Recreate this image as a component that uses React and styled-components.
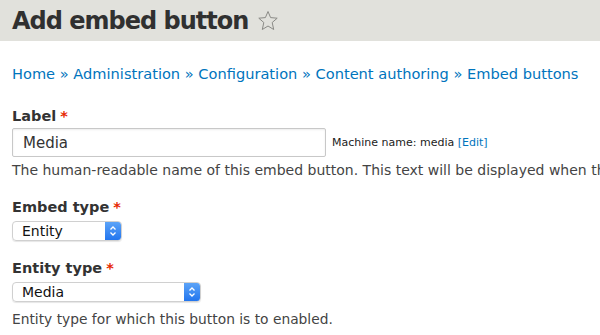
import React from 'react';
import styled, { createGlobalStyle } from 'styled-components';

const GlobalStyle = createGlobalStyle`
  body {
    margin: 0;
    background: #ffffff;
    font-family: "DejaVu Sans", Verdana, sans-serif;
    color: #333333;
    overflow: hidden;
  }
`;

const Header = styled.div`
  background-color: #e1e1dc;
  height: 41px;
  display: flex;
  align-items: center;
  padding-left: 12px;
  gap: 8px;
`;

const Title = styled.h1`
  margin: 0;
  font-size: 24px;
  font-weight: bold;
  color: #303030;
  letter-spacing: -1px;
`;

const Star = styled.svg`
  width: 24px;
  height: 24px;
  margin-top: 1px;
`;

const Content = styled.div`
  padding: 0 12px;
  overflow: hidden;
`;

const Breadcrumb = styled.nav`
  margin-top: 24px;
  font-size: 14.6px;
  color: #0074bd;
  white-space: nowrap;
`;

const Crumb = styled.a`
  color: #0074bd;
  text-decoration: none;
`;

const Field = styled.div`
  margin-top: ${(p) => p.$top}px;
`;

const Label = styled.div`
  font-size: 14.5px;
  font-weight: bold;
  color: #333;
  margin-bottom: ${(p) => p.$gap || 5}px;
`;

const Required = styled.span`
  color: #e62600;
  margin-left: 4px;
`;

const Row = styled.div`
  display: flex;
  align-items: center;
  gap: 6px;
`;

const TextInput = styled.div`
  box-sizing: border-box;
  width: 314px;
  height: 29px;
  border: 1px solid #c8c8c8;
  border-radius: 2px;
  box-shadow: inset 0 1px 2px rgba(0, 0, 0, 0.08);
  display: flex;
  align-items: center;
  padding-left: 10px;
  font-size: 15px;
  color: #333;
`;

const Machine = styled.span`
  font-size: 11px;
  color: #222;
  white-space: nowrap;
`;

const EditLink = styled.a`
  color: #0074bd;
  text-decoration: none;
`;

const Description = styled.div`
  margin-top: ${(p) => p.$top || 5}px;
  font-size: ${(p) => p.$size || 14}px;
  color: #444;
  white-space: nowrap;
`;

const Select = styled.div`
  box-sizing: border-box;
  width: ${(p) => p.$width}px;
  height: 20px;
  border: 1px solid #d0d0d0;
  border-radius: 4px;
  box-shadow: 0 1px 1px rgba(0, 0, 0, 0.1);
  display: flex;
  align-items: center;
  justify-content: space-between;
  font-size: 14px;
  color: #111;
  padding-left: 9px;
  overflow: hidden;
`;

const Stepper = styled.div`
  width: 16px;
  height: 20px;
  background: linear-gradient(#5fa6f8, #1f73ee);
  border-radius: 0 4px 4px 0;
  display: flex;
  align-items: center;
  justify-content: center;
`;

const StepperIcon = () => (
  <svg width="8" height="12" viewBox="0 0 8 12">
    <path d="M1.5 4.5 L4 2 L6.5 4.5 M1.5 7.5 L4 10 L6.5 7.5" fill="none" stroke="#fff" strokeWidth="1.3" />
  </svg>
);

const crumbs = ['Home', 'Administration', 'Configuration', 'Content authoring', 'Embed buttons'];

export default function App() {
  return (
    <>
      <GlobalStyle />
      <Header>
        <Title>Add embed button</Title>
        <Star viewBox="0 0 24 24">
          <path
            d="M12 2.5 L14.6 8.6 L21.2 9.2 L16.2 13.5 L17.7 20.5 L12 17 L6.3 20.5 L7.8 13.5 L2.8 9.2 L9.4 8.6 Z"
            fill="none"
            stroke="#8a8a86"
            strokeWidth="1"
            strokeLinejoin="round"
          />
        </Star>
      </Header>
      <Content>
        <Breadcrumb>
          {crumbs.map((c, i) => (
            <React.Fragment key={c}>
              {i > 0 && ' » '}
              <Crumb href="#">{c}</Crumb>
            </React.Fragment>
          ))}
        </Breadcrumb>
        <Field $top={26}>
          <Label $gap={4}>
            Label<Required>*</Required>
          </Label>
          <Row>
            <TextInput>Media</TextInput>
            <Machine>
              Machine name: media <EditLink href="#">[Edit]</EditLink>
            </Machine>
          </Row>
          <Description>The human-readable name of this embed button. This text will be displayed when the user hovers over the button.</Description>
        </Field>
        <Field $top={21}>
          <Label $gap={6}>
            Embed type<Required>*</Required>
          </Label>
          <Select $width={110}>
            Entity
            <Stepper>
              <StepperIcon />
            </Stepper>
          </Select>
        </Field>
        <Field $top={19}>
          <Label $gap={6}>
            Entity type<Required>*</Required>
          </Label>
          <Select $width={189}>
            Media
            <Stepper>
              <StepperIcon />
            </Stepper>
          </Select>
          <Description $top={9} $size={13.8}>Entity type for which this button is to enabled.</Description>
        </Field>
      </Content>
    </>
  );
}
